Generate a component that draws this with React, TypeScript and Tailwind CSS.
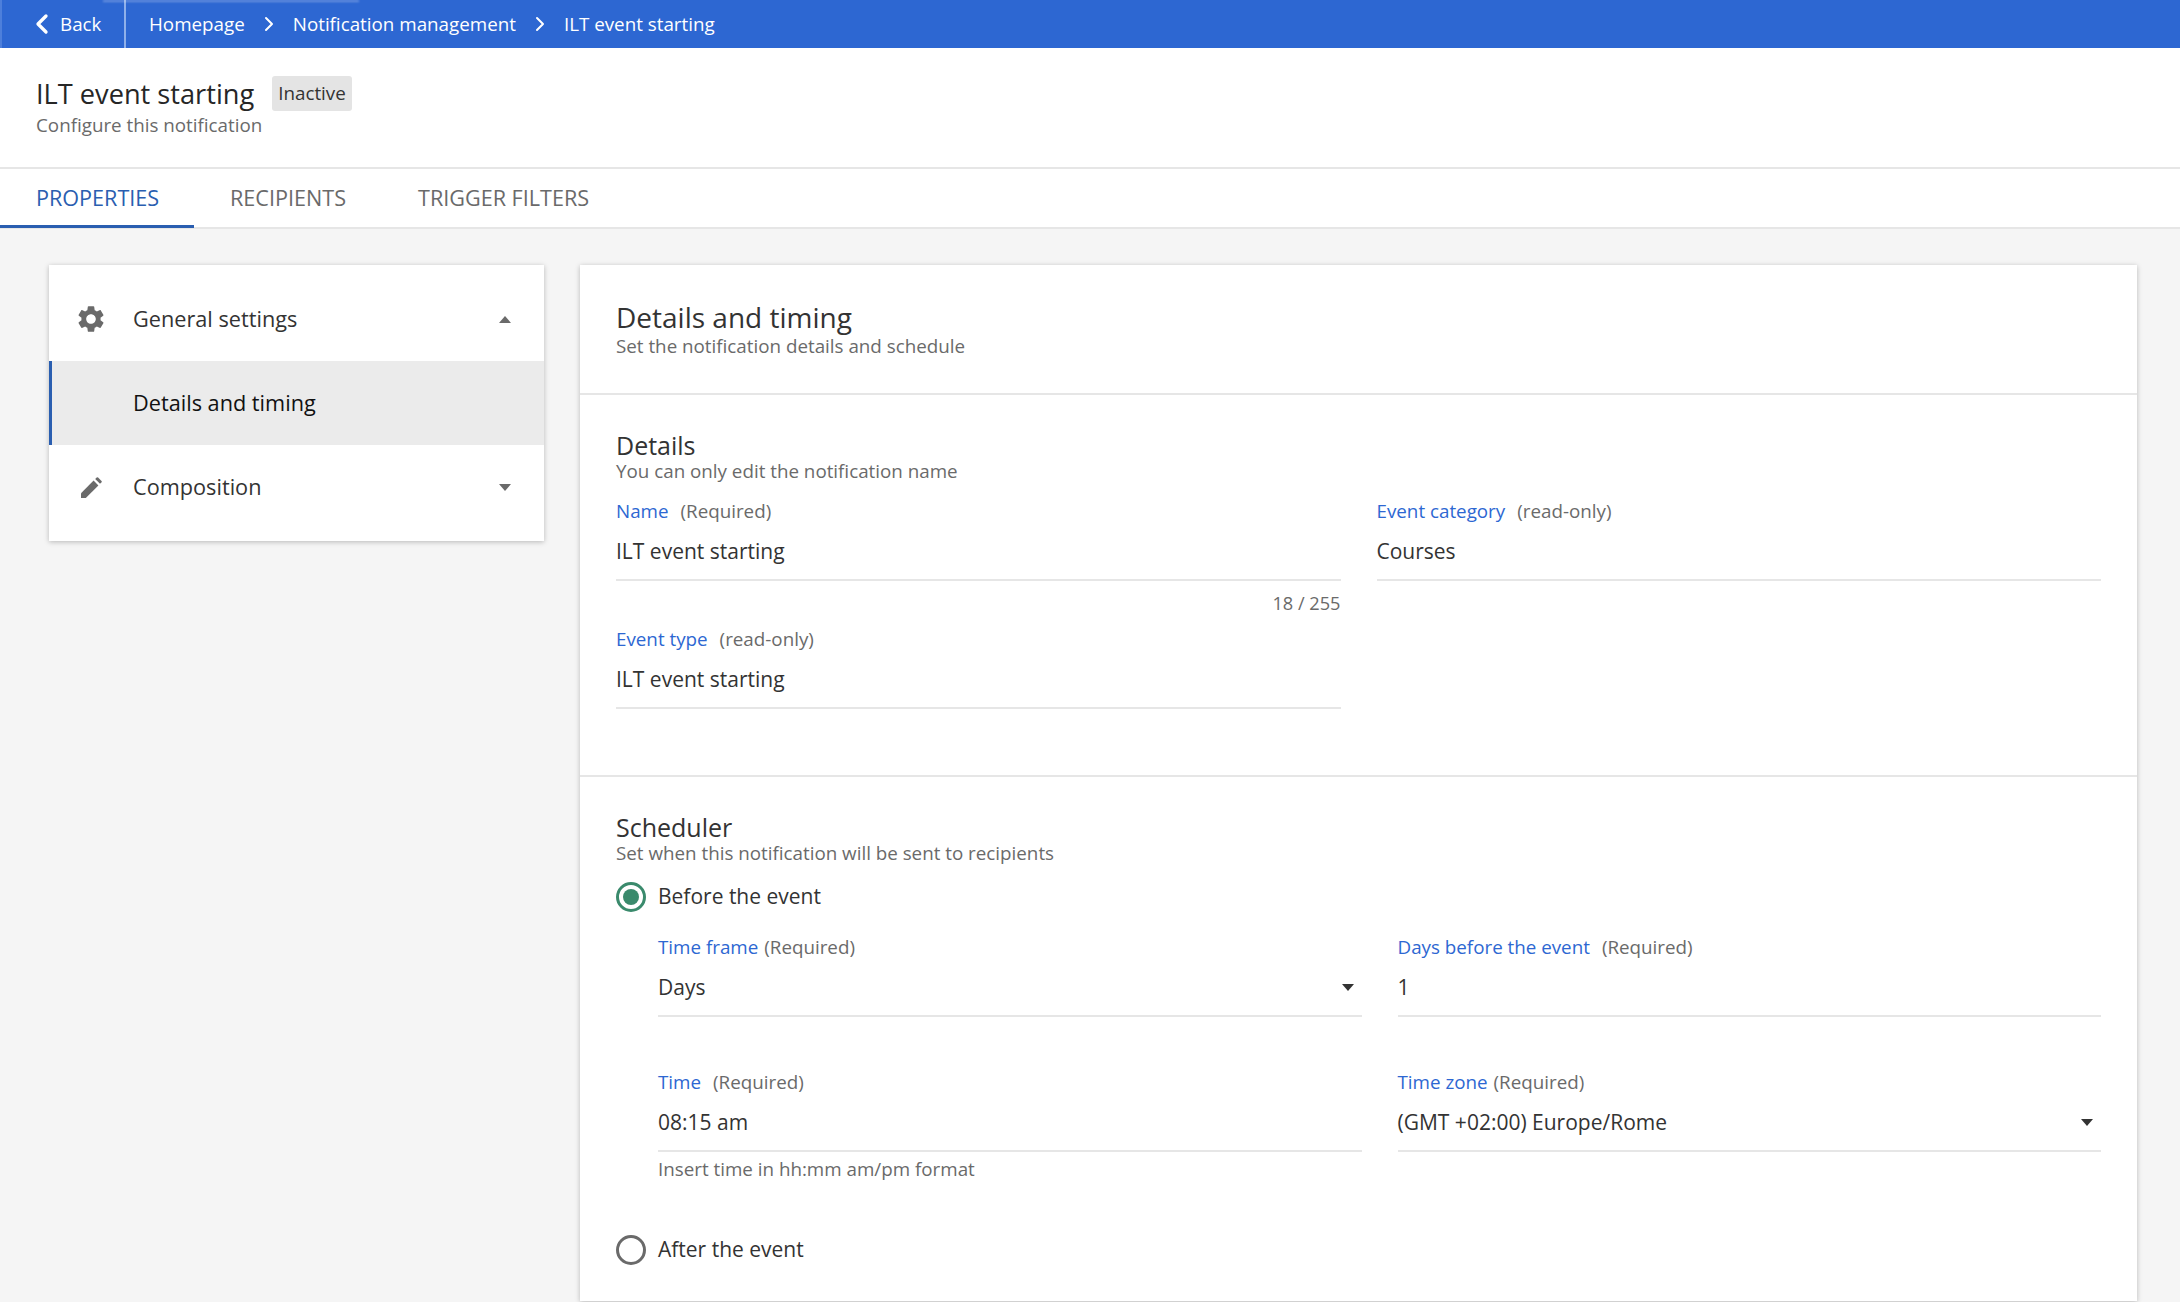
import { ChevronLeft, ChevronRight } from 'lucide-react';

function GearIcon() {
  return (
    <svg viewBox="0 0 24 24" className="w-8 h-8 fill-[#6a6a6a]">
      <path d="M19.14 12.94c.04-.3.06-.61.06-.94 0-.32-.02-.64-.07-.94l2.03-1.58c.18-.14.23-.41.12-.61l-1.92-3.32c-.12-.22-.37-.29-.59-.22l-2.39.96c-.5-.38-1.03-.7-1.62-.94l-.36-2.54c-.04-.24-.24-.41-.48-.41h-3.84c-.24 0-.43.17-.47.41l-.36 2.54c-.59.24-1.13.57-1.62.94l-2.39-.96c-.22-.08-.47 0-.59.22L2.74 8.87c-.12.21-.08.47.12.61l2.03 1.58c-.05.3-.09.63-.09.94s.02.64.07.94l-2.03 1.58c-.18.14-.23.41-.12.61l1.92 3.32c.12.22.37.29.59.22l2.39-.96c.5.38 1.03.7 1.62.94l.36 2.54c.05.24.24.41.48.41h3.84c.24 0 .44-.17.47-.41l.36-2.54c.59-.24 1.13-.56 1.62-.94l2.39.96c.22.08.47 0 .59-.22l1.92-3.32c.12-.22.07-.47-.12-.61l-2.01-1.58zM12 15.6c-1.98 0-3.6-1.62-3.6-3.6s1.62-3.6 3.6-3.6 3.6 1.62 3.6 3.6-1.62 3.6-3.6 3.6z" />
    </svg>
  );
}

function PencilIcon() {
  return (
    <svg viewBox="0 0 21 21" className="w-[21px] h-[21px] fill-[#6a6a6a]">
      <path d="M0 21V16.2L12.6 3.6L17.4 8.4L4.8 21Z" />
      <path d="M14.2 2L15.7 .5a1 1 0 0 1 1.4 0L20.5 3.9a1 1 0 0 1 0 1.4L19 6.8Z" />
    </svg>
  );
}

function Caret({ up = false, dark = false }: { up?: boolean; dark?: boolean }) {
  return (
    <svg viewBox="0 0 12 7" className={`w-3 h-[7px] ${dark ? 'fill-[#333333]' : 'fill-[#6a6a6a]'}`}>
      <path d={up ? 'M0 7 L6 0 L12 7 Z' : 'M0 0 L12 0 L6 7 Z'} />
    </svg>
  );
}

function Field({ label, note, value, gap = 'gap-3', caret = false }: {
  label: string; note: string; value: string; gap?: string; caret?: boolean;
}) {
  return (
    <div>
      <div className={`flex items-center h-6 text-[18.8px] font-medium ${gap}`}>
        <span className="text-[#2d67d2]">{label}</span>
        <span className="text-[#6a6a6a]">{note}</span>
      </div>
      <div className="flex items-center justify-between h-[58px] pt-[1px] border-b-2 border-[#e6e6e6] text-[21px] text-[#333333]">
        <span>{value}</span>
        {caret && <span className="pr-[8px] flex"><Caret dark /></span>}
      </div>
    </div>
  );
}

function Radio({ checked, label }: { checked: boolean; label: string }) {
  return (
    <div className="flex items-center h-[30px] gap-3 text-[21px] text-[#333333]">
      <span className={`w-[30px] h-[30px] rounded-full border-[3px] flex items-center justify-center ${checked ? 'border-[#3a8a6c]' : 'border-[#6a6a6a]'}`}>
        {checked && <span className="w-4 h-4 rounded-full bg-[#3a8a6c]" />}
      </span>
      <span>{label}</span>
    </div>
  );
}

export default function App() {
  return (
    <div className="h-[1302px] overflow-hidden bg-[#f5f5f5] font-['Open_Sans',sans-serif] text-[#333333]">
      <div className="relative h-12 bg-[#2d67d2] flex items-center text-white text-[18.8px] font-medium">
        <div className="absolute top-0 left-0 w-[2px] h-12 bg-[#4d7fdb]" />
        <div className="absolute top-0 left-[103px] w-[256px] h-[2px] bg-white/30 blur-[1px]" />
        <div className="w-[126px] h-full flex items-center pl-[26px] border-r-2 border-[#8fb0ea]">
          <ChevronLeft className="w-8 h-8" strokeWidth={2.5} />
          <span className="ml-[2px]">Back</span>
        </div>
        <div className="flex items-center pl-[23px]">
          <span>Homepage</span>
          <ChevronRight className="w-6 h-6 mx-[12px]" strokeWidth={2} />
          <span>Notification management</span>
          <ChevronRight className="w-6 h-6 mx-[12px]" strokeWidth={2} />
          <span>ILT event starting</span>
        </div>
      </div>

      <div className="bg-white h-[121px] border-b-2 border-[#e6e6e6] pl-9 pt-7">
        <div className="flex items-center h-[35px]">
          <span className="pt-[2px] text-[27.2px] font-medium text-[#262626]">ILT event starting</span>
          <span className="ml-[18px] h-[35px] px-[6px] flex items-center rounded-[3px] bg-[#e4e4e4] text-[18.8px] font-medium">Inactive</span>
        </div>
        <div className="text-[18.8px] leading-[24px] text-[#6a6a6a] font-medium mt-[2px]">Configure this notification</div>
      </div>

      <div className="bg-white h-[60px] border-b-2 border-[#e6e6e6] flex text-[21.6px] font-medium text-[#6a6a6a]">
        <div className="w-[194px] h-[59px] pl-9 pt-[2px] flex items-center border-b-[3px] border-[#2a5eb0] text-[#2a5eb0]">PROPERTIES</div>
        <div className="h-[59px] pl-9 pt-[2px] flex items-center border-b-[3px] border-transparent">RECIPIENTS</div>
        <div className="h-[59px] pl-[72px] pt-[2px] flex items-center border-b-[3px] border-transparent">TRIGGER FILTERS</div>
      </div>

      <div className="flex items-start pt-9 pl-[49px] pr-[43px] gap-9">
        <div className="w-[495px] shrink-0 bg-white shadow-[0_1px_5px_rgba(0,0,0,0.25)] py-3 text-[21.7px] font-medium">
          <div className="h-[84px] flex items-center pl-[26px] pr-[33px]">
            <GearIcon />
            <span className="ml-[26px] flex-1">General settings</span>
            <Caret up />
          </div>
          <div className="h-[84px] flex items-center pl-[81px] bg-[#ebebeb] border-l-[3px] border-[#2a5eb0] text-[#111111]">Details and timing</div>
          <div className="h-[84px] flex items-center pl-[32px] pr-[33px]">
            <PencilIcon />
            <span className="ml-[31px] flex-1">Composition</span>
            <Caret />
          </div>
        </div>

        <div className="flex-1 h-[1036px] bg-white shadow-[0_1px_5px_rgba(0,0,0,0.25)]">
          <div className="h-[130px] border-b-2 border-[#e6e6e6] px-9 pt-[34px]">
            <div className="text-[28px] leading-[36px] font-medium">Details and timing</div>
            <div className="text-[18.8px] leading-[22px] text-[#6a6a6a] font-medium">Set the notification details and schedule</div>
          </div>

          <div className="h-[382px] border-b-2 border-[#e6e6e6] px-9 pt-[35px]">
            <div className="text-[25px] leading-[30px] font-medium">Details</div>
            <div className="text-[18.8px] leading-[22px] text-[#6a6a6a] font-medium">You can only edit the notification name</div>
            <div className="grid grid-cols-2 gap-x-9 mt-[17px]">
              <Field label="Name" note="(Required)" value="ILT event starting" />
              <Field label="Event category" note="(read-only)" value="Courses" />
              <div className="col-span-2 grid grid-cols-2 gap-x-9">
                <div className="text-right text-[18.2px] leading-[24px] text-[#6a6a6a] font-medium mt-[10px]">18 / 255</div>
              </div>
              <div className="mt-[12px]">
                <Field label="Event type" note="(read-only)" value="ILT event starting" />
              </div>
            </div>
          </div>

          <div className="px-9 pt-[35px]">
            <div className="text-[25px] leading-[30px] font-medium">Scheduler</div>
            <div className="text-[18.8px] leading-[22px] text-[#6a6a6a] font-medium">Set when this notification will be sent to recipients</div>
            <div className="mt-[18px]">
              <Radio checked label="Before the event" />
            </div>
            <div className="grid grid-cols-2 gap-x-9 pl-[42px] mt-[23px]">
              <Field label="Time frame" note="(Required)" gap="gap-[6px]" value="Days" caret />
              <Field label="Days before the event" note="(Required)" value="1" />
              <div className="mt-[53px]">
                <Field label="Time" note="(Required)" value="08:15 am" />
                <div className="text-[18.8px] leading-[24px] text-[#6a6a6a] font-medium mt-[5px]">Insert time in hh:mm am/pm format</div>
              </div>
              <div className="mt-[53px]">
                <Field label="Time zone" note="(Required)" gap="gap-[6px]" value="(GMT +02:00) Europe/Rome" caret />
              </div>
            </div>
            <div className="mt-[54px]">
              <Radio checked={false} label="After the event" />
            </div>
          </div>
        </div>
      </div>
    </div>
  );
}
